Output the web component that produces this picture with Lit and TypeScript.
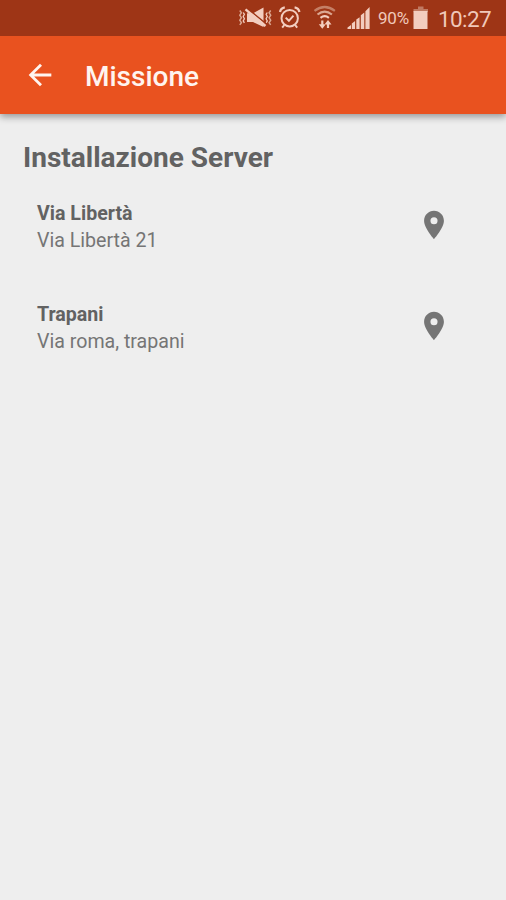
import { LitElement, html, css } from "lit";
import { customElement, property } from "lit/decorators.js";

interface Place {
  name: string;
  address: string;
}

@customElement("status-bar")
class StatusBar extends LitElement {
  static styles = css`
    :host {
      display: flex;
      position: relative;
      z-index: 1;
      box-sizing: border-box;
      height: 36px;
      padding-right: 15px;
      align-items: center;
      justify-content: flex-end;
      background: #9e3516;
      color: #f0c8ba;
      fill: none;
      stroke: #f3cdbf;
    }
    svg { display: block; flex: none; }
    .solid { fill: #f3cdbf; stroke: none; }
    .dim { stroke: #c47f66; }
    .mid { stroke: #dba792; }
    .dimfill { fill: #c07a62; stroke: none; }
    .percent { width: 31px; margin-left: 8px; font-size: 17px; letter-spacing: -0.2px; white-space: nowrap; }
    .clock { width: 53px; margin-left: 10px; font-size: 22.500px; letter-spacing: -0.6px; white-space: nowrap; }
    .percent, .clock { line-height: 36px; }
    .clock { padding-top: 1px; }
    .battery { margin-left: 4px; }
  `;
  render() {
    return html`
      <svg width="132" height="36" viewBox="238 0 132 36">
        <path class="mid" stroke-width="1.500" d="M239.800 10.500l1.600 2.200-1.600 2.500 1.600 2.500-1.600 2.500 1.600 2.500-1.600 2.200M270.700 10.500l-1.600 2.200 1.600 2.500-1.600 2.500 1.600 2.500-1.600 2.500 1.600 2.200"/>
        <path stroke-width="1.300" d="M243.200 12.500l1.200 1.800-1.200 2.200 1.200 2.200-1.200 2.200 1.200 2M267.300 12.500l-1.200 1.800 1.200 2.200-1.200 2.200 1.200 2.200-1.200 2"/>
        <path class="solid" d="M247 13.300h6l10.500-5.800v19.500L253 22h-6z"/>
        <path stroke="#9e3516" stroke-width="1.500" d="M246.500 7.800L266.500 24.200"/>
        <path stroke-width="2.400" d="M245.500 9.300L265.500 26"/>
        <circle cx="289.700" cy="18.200" r="8.200" stroke-width="2"/>
        <path stroke-width="2" d="M285.700 17.600l3.200 3.200 4.600-5.200M284.300 25l-2.100 2.700M295.100 25l2.100 2.700"/>
        <path stroke-width="2.300" d="M280 12q.7-4 4.800-4.700M299.400 12q-.7-4-4.800-4.700"/>
        <path class="dim" stroke-width="2.200" d="M314.500 10.800q10.200-7.600 20.400 0"/>
        <path class="mid" stroke-width="2.200" d="M317.500 14.500q7.200-5.600 14.400 0"/>
        <path stroke-width="2.200" d="M320.500 17.800q4.200-3.200 8.400 0"/>
        <path stroke-width="2.200" d="M322.300 20.500v5M328 22.500v5.500"/>
        <path class="solid" d="M318.800 24.200h7l-3.500 4.500zM324.500 24.600h7l-3.500-4.600z"/>
        <path class="solid" d="M347.500 29v-1.500l3.500-2.500v4zM351.800 29v-5.500l3.300-2.500v8zM356.300 29v-9.500l3.300-2.300v11.800zM360.800 29V15.300l3.500-2.700V29zM365.400 29V11.200l4.200-4.200V29z"/>
      </svg>
      <span class="percent">90%</span>
      <svg class="battery" width="15" height="36" viewBox="413 0 15 36">
        <path class="dimfill" d="M418 6.500h5.500v2.500h4.500v3h-14.500V9h4.500z"/>
        <path class="solid" d="M413.500 11h14v18h-14z"/>
      </svg>
      <span class="clock">10:27</span>
    `;
  }
}

@customElement("app-header")
class AppHeader extends LitElement {
  @property() heading = "";
  static styles = css`
    :host {
      display: flex;
      position: relative;
      box-sizing: border-box;
      height: 78px;
      padding: 0 23px;
      align-items: center;
      gap: 28px;
      background: #e9521f;
      color: #fff4ef;
      box-shadow: 0 3px 7px rgba(0, 0, 0, 0.36);
    }
    svg { display: block; fill: #fff4ef; }
    h1 { margin: 0; padding-top: 4px; font-size: 28px; line-height: 36px; font-weight: 500; }
  `;
  render() {
    return html`
      <svg width="34" height="34" viewBox="0 0 24 24"><path d="M20 11H7.830l5.590-5.590L12 4l-8 8 8 8 1.410-1.410L7.830 13H20v-2z"/></svg>
      <h1>${this.heading}</h1>
    `;
  }
}

@customElement("place-row")
class PlaceRow extends LitElement {
  @property({ attribute: false }) place!: Place;
  static styles = css`
    :host {
      display: flex;
      height: 54px;
      justify-content: space-between;
      font-size: 19.600px;
      line-height: 27px;
      color: #757575;
    }
    .name { font-weight: 700; color: #626262; }
    svg { display: block; margin-top: 8px; fill: #757575; }
  `;
  render() {
    return html`
      <div>
        <div class="name">${this.place.name}</div>
        <div>${this.place.address}</div>
      </div>
      <svg width="34" height="34" viewBox="0 0 24 24"><path d="M12 2C8.130 2 5 5.130 5 9c0 5.250 7 13 7 13s7-7.750 7-13c0-3.870-3.130-7-7-7zm0 9.500a2.500 2.500 0 0 1 0-5 2.500 2.500 0 0 1 0 5z"/></svg>
    `;
  }
}

@customElement("app-root")
class AppRoot extends LitElement {
  private places: Place[] = [
    { name: "Via Libertà", address: "Via Libertà 21" },
    { name: "Trapani", address: "Via roma, trapani" },
  ];
  static styles = css`
    :host {
      display: block;
      height: 100vh;
      overflow: hidden;
      background: #eee;
      font-family: Roboto, sans-serif;
    }
    h2 { margin: 0; padding: 26px 23px 0; font-size: 28px; line-height: 36px; font-weight: 700; color: #626262; }
    .places { display: flex; flex-direction: column; gap: 47px; padding: 24px 55.500px 0 37px; }
  `;
  render() {
    return html`
      <status-bar></status-bar>
      <app-header heading="Missione"></app-header>
      <main>
        <h2>Installazione Server</h2>
        <div class="places">
          ${this.places.map((place) => html`<place-row .place=${place}></place-row>`)}
        </div>
      </main>
    `;
  }
}
